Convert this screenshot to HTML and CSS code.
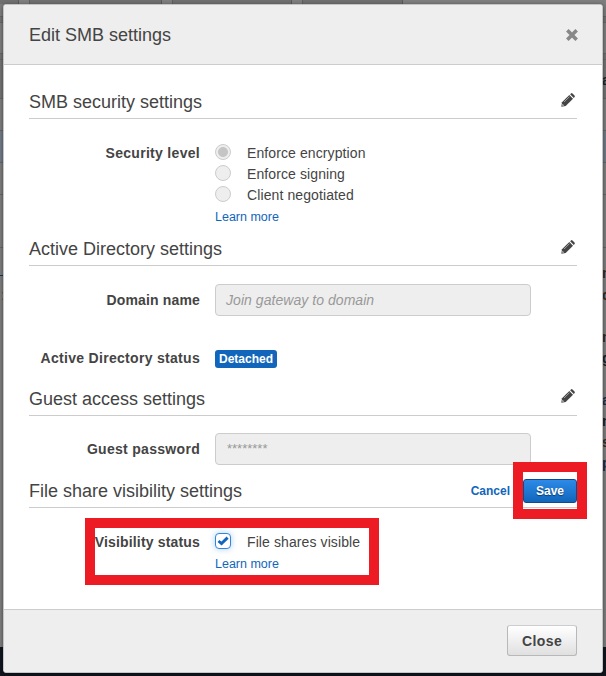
FILE: index.html
```
<!DOCTYPE html>
<html lang="en">
<head>
<meta charset="utf-8">
<title>Edit SMB settings</title>
<link rel="stylesheet" href="styles.css">
</head>
<body>
<svg class="symbols" width="0" height="0">
  <symbol id="pencil" viewBox="0 0 14 14">
    <path d="M0.3 13.7 L1 9.3 L8.3 2 L12 5.7 L4.7 13 Z" fill="#444"/>
    <path d="M9.1 1.2 L10 .4 Q10.8 -.2 11.5 .5 L13.5 2.5 Q14.2 3.2 13.6 4 L12.8 4.9 Z" fill="#444"/>
    <path d="M1.4 10.8 L3.2 12.5 L1.3 12.8 Z" fill="#ddd"/>
    <path d="M3.1 9 L8.5 3.6" stroke="#aaa" stroke-width=".9"/>
  </symbol>
</svg>

<div class="backdrop">
  <div class="tabs"><i></i><i></i><i></i><i></i></div>
  <div class="rows"><i class="r1"></i><i class="r2"></i><i class="r3"></i><i class="r4"></i><i class="r5"></i><i class="r6"></i><i class="r7"></i><i class="r8"></i></div>
  <div class="left-rule"></div>
  <div class="left-text">:</div>
  <div class="side"><b class="s1">a</b><b class="s2">n</b><b class="s3">c</b><b class="s4">n</b><b class="s5">g</b><b class="s6">a</b><b class="s7">n</b><b class="s8">s</b><b class="s9">p</b></div>
  <div class="page-foot"></div>
</div>

<main class="modal">
  <header class="modal-head">
    <h1>Edit SMB settings</h1>
    <svg class="close-icon" viewBox="0 0 12 12"><path d="M2.6 2.6 L9.4 9.4 M9.4 2.6 L2.6 9.4" stroke="#888" stroke-width="3.6" stroke-linecap="square"/></svg>
  </header>
  <div class="modal-body">
    <section class="security">
      <div class="section-head"><h2>SMB security settings</h2><svg class="pencil"><use href="#pencil"/></svg></div>
      <div class="field">
        <div class="label">Security level</div>
        <div class="control">
          <div class="option"><span class="radio selected"></span>Enforce encryption</div>
          <div class="option"><span class="radio"></span>Enforce signing</div>
          <div class="option"><span class="radio"></span>Client negotiated</div>
          <div class="learn">Learn more</div>
        </div>
      </div>
    </section>
    <section class="directory">
      <div class="section-head"><h2>Active Directory settings</h2><svg class="pencil"><use href="#pencil"/></svg></div>
      <div class="field tall"><div class="label">Domain name</div><div class="input hint">Join gateway to domain</div></div>
      <div class="field status"><div class="label">Active Directory status</div><span class="badge">Detached</span></div>
    </section>
    <section class="guest">
      <div class="section-head"><h2>Guest access settings</h2><svg class="pencil"><use href="#pencil"/></svg></div>
      <div class="field tall"><div class="label">Guest password</div><div class="input stars">********</div></div>
    </section>
    <section class="visibility">
      <div class="section-head">
        <h2>File share visibility settings</h2>
        <div class="actions"><span class="cancel">Cancel</span><span class="save">Save<span class="mark mark-save"></span></span></div>
      </div>
      <div class="field">
        <div class="label">Visibility status</div>
        <div class="control">
          <div class="option"><span class="check"><svg viewBox="0 0 12 12"><path d="M1.5 6 L4.5 8.6 L10.6 2.6" fill="none" stroke="#1166bb" stroke-width="2.9"/></svg></span>File shares visible</div>
          <div class="learn">Learn more</div>
        </div>
        <span class="mark mark-field"></span>
      </div>
    </section>
  </div>
  <footer class="modal-foot"><span class="close">Close</span></footer>
</main>
</body>
</html>
```
FILE: styles.css
```
* { box-sizing: border-box; }
body {
  margin: 0;
  height: 676px;
  padding: 4px 3px;
  overflow: hidden;
  position: relative;
  font-family: "Liberation Sans", Arial, sans-serif;
  font-size: 14px;
  color: #444;
  background: #7f7f7f;
}
.symbols { position: absolute; }
h1, h2 { margin: 0; font-size: 18px; font-weight: normal; line-height: 22px; }

/* Dimmed page behind the dialog */
.backdrop { position: absolute; inset: 0; overflow: hidden; }
.tabs { display: grid; grid-template-columns: 19px 133px 120px 101px; column-gap: 10px; height: 4px; }
.tabs i { background: #707070; border-right: 1px solid #5a5a5a; border-left: 1px solid #606060; }
.tabs i:first-child { border-left: 0; }
.rows { position: absolute; top: 16px; left: 0; right: 0; display: flex; flex-direction: column; }
.rows i { border-top: 1px solid #686868; }
.r1 { height: 6px; background: #747474; }
.r2 { height: 31px; }
.r3 { height: 6px; background: #747474; }
.r4 { height: 39px; background: #757575; }
.r5 { height: 32px; }
.r6 { height: 32px; background: #737d88; }
.r7 { height: 32px; }
.r8 { height: 54px; border-bottom: 1px solid #686868; }
.left-rule { position: absolute; left: 0; top: 275px; width: 3px; height: 1px; background: #17365b; }
.left-text { position: absolute; left: 1px; top: 287px; width: 2px; overflow: hidden; color: #5d5144; }
.side { position: absolute; left: 603px; top: 0; width: 3px; height: 676px; overflow: hidden; }
.side b { position: absolute; left: -1px; line-height: 18px; color: #222; }
.s1 { top: 71px; }
.s2 { top: 264px; }
.s3 { top: 286px; }
.s4 { top: 328px; }
.s5 { top: 349px; }
.s6 { top: 391px; }
.s7 { top: 412px; }
.s8 { top: 433px; }
.s9 { top: 454px; }
.side .s2, .side .s3, .side .s4, .side .s8 { color: #3b2b20; }
.side .s6, .side .s9 { color: #222b42; }
.page-foot { position: absolute; left: 0; right: 0; bottom: 0; height: 29px; background: #11161f; }

/* Dialog */
.modal {
  position: relative;
  display: flex;
  flex-direction: column;
  width: 600px;
  height: 669px;
  border: 1px solid #c5c5c5;
  border-radius: 3px;
  background: #fff;
  box-shadow: 0 1px 4px rgba(0, 0, 0, .5);
  overflow: hidden;
}
.modal-head {
  display: flex;
  align-items: center;
  justify-content: space-between;
  height: 60px;
  padding: 0 25px;
  background: #eee;
  border-bottom: 1px solid #ccc;
}
.close-icon { width: 12px; height: 12px; margin: 1px -1px 0 0; }
.modal-body { flex: 1; padding: 20px 25px 0; }
.security { height: 147px; }
.directory { height: 150px; }
.guest { height: 92px; }
.section-head {
  display: flex;
  align-items: center;
  justify-content: space-between;
  height: 34px;
  border-bottom: 1px solid #ccc;
}
.pencil { width: 14px; height: 14px; margin: 0 2px 3px 0; }
.guest .pencil { margin-bottom: 5px; }
.field { position: relative; display: grid; grid-template-columns: 171px 316px; column-gap: 15px; padding-top: 24px; }
.field.tall { padding-top: 18px; align-items: center; }
.guest .field.tall { padding-top: 17px; }
.field.status { padding-top: 34px; }
.status .badge { justify-self: start; }
.label {
  text-align: right;
  font-weight: bold;
  line-height: 21px;
  letter-spacing: .3px;
  white-space: nowrap;
}
.directory .tall .label { letter-spacing: .15px; }
.visibility .label { letter-spacing: .17px; }
.status .label { line-height: 17px; }
.option { display: flex; align-items: center; height: 21px; padding-bottom: 2px; letter-spacing: .1px; }
.radio {
  width: 16px;
  height: 16px;
  margin: -2px 16px 0 0;
  border: 1px solid #ccc;
  border-radius: 50%;
  background: #eee;
}
.selected { background: radial-gradient(circle, #c5c5c5 0 4.6px, #eee 5.3px); }
.learn { font-size: 12.5px; line-height: 22px; color: #1166bb; }
.input {
  height: 32px;
  padding: 0 10px;
  border: 1px solid #ccc;
  border-radius: 4px;
  background: #eee;
  color: #999;
  line-height: 30px;
}
.hint { font-style: italic; letter-spacing: .05px; }
.stars { padding-left: 11px; font-size: 13px; }
.badge {
  height: 18px;
  padding: 0 4px;
  border-radius: 3px;
  background: #1166bb;
  color: #fff;
  font-size: 12px;
  font-weight: bold;
  line-height: 18px;
}
.actions { display: flex; align-items: center; gap: 13px; font-size: 12px; font-weight: bold; }
.cancel { color: #1166bb; }
.save {
  position: relative;
  width: 54px;
  height: 24px;
  border: 1px solid #0f4b8c;
  border-radius: 3px;
  background: linear-gradient(#2d8ae8, #1166bb);
  color: #fff;
  line-height: 22px;
  text-align: center;
  text-shadow: 0 1px 1px #0a3c70;
}
.check {
  width: 16px;
  height: 16px;
  margin: -2px 16px 0 0;
  padding: 1px;
  border: 1px solid #2f86dc;
  border-radius: 4px;
  background: #fff;
  box-shadow: 0 0 6px rgba(47, 134, 220, .4);
}
.check svg { display: block; width: 12px; height: 12px; }
.mark { position: absolute; border: 10px solid #ed1c24; }
.mark-save { left: -11px; top: -18px; width: 74px; height: 57px; }
.mark-field { left: 56px; top: 10px; width: 294px; height: 67px; }
.modal-foot {
  display: flex;
  align-items: center;
  justify-content: flex-end;
  height: 63px;
  padding: 0 25px;
  background: #eee;
  border-top: 1px solid #ccc;
}
.close {
  width: 70px;
  height: 31px;
  margin-bottom: 1px;
  border: 1px solid #b8b8b8;
  border-top-color: #ccc;
  border-radius: 3px;
  background: linear-gradient(#fff, #e0e0e0);
  font-weight: bold;
  letter-spacing: .4px;
  line-height: 31px;
  text-align: center;
}
```
